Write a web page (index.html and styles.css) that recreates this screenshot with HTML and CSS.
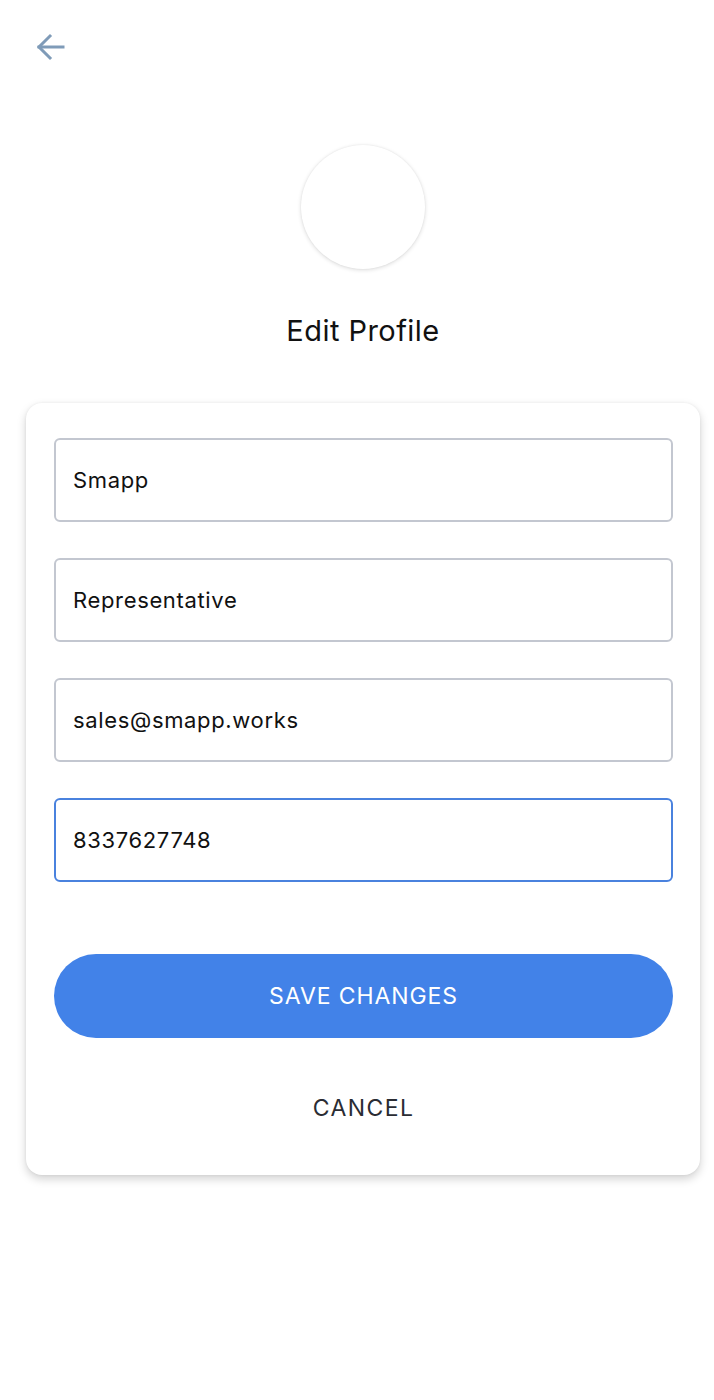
FILE: index.html
```html
<!DOCTYPE html>
<html lang="en">
<head>
<meta charset="utf-8">
<title>Edit Profile</title>
<link rel="stylesheet" href="styles.css">
</head>
<body>
<div class="screen">
  <header class="topbar">
    <button class="back" aria-label="Back">
      <svg width="32" height="32" viewBox="0 0 32 32" fill="none" stroke="#7f9bb8" stroke-width="3" stroke-linecap="square">
        <path d="M29 16H5"/>
        <path d="M16 5L5 16L16 27"/>
      </svg>
    </button>
  </header>
  <div class="avatar"></div>
  <h1 class="title">Edit Profile</h1>
  <form class="card">
    <div class="field">Smapp</div>
    <div class="field">Representative</div>
    <div class="field">sales@smapp.works</div>
    <div class="field focused">8337627748</div>
    <button type="button" class="save">SAVE CHANGES</button>
    <button type="button" class="cancel">CANCEL</button>
  </form>
</div>
</body>
</html>
```
FILE: styles.css
```css
* { box-sizing: border-box; }
html, body { margin: 0; padding: 0; background: #ffffff; }
body {
  font-family: Inter, "Open Sans", "Liberation Sans", sans-serif;
  color: #111;
  width: 714px;
  min-height: 1400px;
}
.screen {
  display: flex;
  flex-direction: column;
}
.topbar {
  height: 145px;
  padding: 31px 0 0 34px;
}
.back {
  border: 0;
  background: none;
  padding: 0;
  width: 32px;
  height: 32px;
  display: block;
}
.avatar {
  width: 124px;
  height: 124px;
  border-radius: 50%;
  background: #fff;
  margin-left: 301px;
  box-shadow: 0 1px 4px rgba(0,0,0,0.14), 0 0 2px rgba(0,0,0,0.06);
}
.title {
  margin: 42px 0 0 26px;
  width: 674px;
  text-align: center;
  font-weight: 400;
  font-size: 29px;
  line-height: 40px;
  letter-spacing: 0.45px;
  color: #111;
}
.card {
  margin: 52px 0 0 26px;
  width: 674px;
  background: #fff;
  border-radius: 16px;
  box-shadow: 0 4px 10px rgba(0,0,0,0.18), 0 0 3px rgba(0,0,0,0.06);
  padding: 35px 27px 42px 28px;
  display: flex;
  flex-direction: column;
  gap: 36px;
}
.field {
  height: 84px;
  border: 2px solid #c3c7d0;
  border-radius: 6px;
  padding: 0 17px;
  display: flex;
  align-items: center;
  font-size: 22px;
  letter-spacing: 0.65px;
  color: #111;
}
.field.focused { border-color: #4a82de; }
.save {
  margin-top: 36px;
  height: 84px;
  border: 0;
  border-radius: 42px;
  background: #4282e8;
  color: #fff;
  font-family: inherit;
  font-size: 23px;
  font-weight: 400;
  letter-spacing: 0.9px;
}
.cancel {
  margin-top: 9px;
  height: 50px;
  border: 0;
  background: none;
  font-family: inherit;
  font-size: 23px;
  letter-spacing: 1.4px;
  color: #2a2c33;
}
```
